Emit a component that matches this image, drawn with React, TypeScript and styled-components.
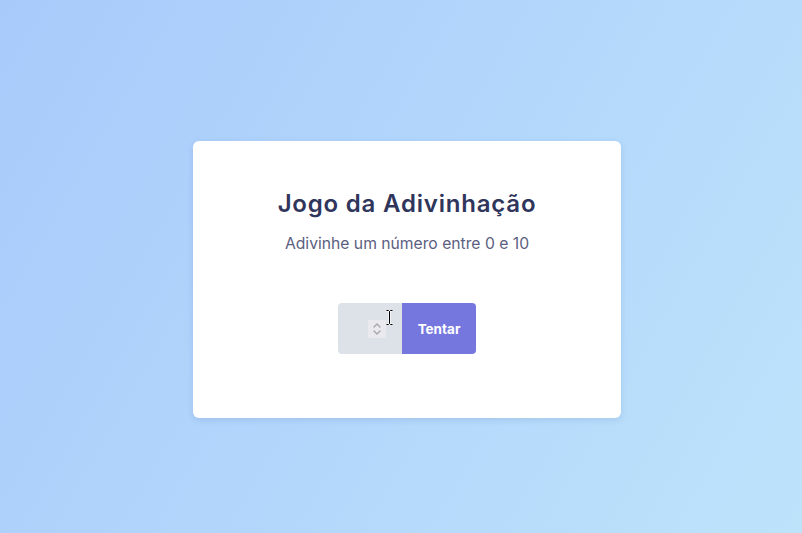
import React from "react";
import styled, { createGlobalStyle } from "styled-components";

const Global = createGlobalStyle`
  html, body { margin: 0; padding: 0; height: 100%; }
  #root { height: 100%; }
  * { box-sizing: border-box; }
`;

const Page = styled.main`
  width: 100%;
  height: 100vh;
  display: flex;
  align-items: center;
  justify-content: center;
  background-image: linear-gradient(120deg, #a8cafb 0%, #bde3fb 100%);
  font-family: "Inter", "Noto Sans", sans-serif;
`;

const Card = styled.section`
  width: 428px;
  height: 277px;
  margin: 26px 0 0 12px;
  background: #ffffff;
  border-radius: 6px;
  box-shadow: 0 2px 6px rgba(80, 110, 170, 0.18);
  display: flex;
  flex-direction: column;
  align-items: center;
  padding-top: 47px;
`;

const Title = styled.h1`
  margin: 0;
  font-family: "Inter", "Noto Sans", sans-serif;
  font-weight: 600;
  font-size: 24px;
  letter-spacing: 0.8px;
  line-height: 32px;
  color: #30355c;
`;

const Subtitle = styled.p`
  margin: 14px 0 0;
  font-family: "Inter", "Noto Sans", sans-serif;
  font-size: 15.7px;
  line-height: 20px;
  color: #5b5e80;
`;

const Form = styled.form`
  margin-top: 49px;
  display: flex;
  height: 51px;
  border-radius: 4px;
  overflow: hidden;
`;

const InputWrap = styled.div`
  position: relative;
  width: 64px;
  height: 100%;
  background: #dde1e8;
`;

const NumberInput = styled.input`
  width: 100%;
  height: 100%;
  border: none;
  outline: none;
  background: transparent;
  font-family: "Inter", sans-serif;
  font-size: 15px;
  text-align: center;
  -moz-appearance: textfield;
  &::-webkit-inner-spin-button,
  &::-webkit-outer-spin-button {
    -webkit-appearance: none;
    margin: 0;
  }
`;

const Spinner = styled.span`
  position: absolute;
  left: 30px;
  top: 17px;
  width: 18px;
  height: 18px;
  background: #e9e9ee;
  display: flex;
  align-items: center;
  justify-content: center;
  pointer-events: none;
`;

const Cursor = styled.svg`
  position: absolute;
  left: 48px;
  top: 7px;
  pointer-events: none;
`;

const Button = styled.button`
  width: 74px;
  height: 100%;
  border: none;
  background: #7577df;
  color: #ffffff;
  font-family: "Inter", "Noto Sans", sans-serif;
  font-weight: 700;
  font-size: 13.5px;
  cursor: pointer;
`;

export default function App() {
  return (
    <>
      <Global />
      <Page>
        <Card>
          <Title>Jogo da Adivinhação</Title>
          <Subtitle>Adivinhe um número entre 0 e 10</Subtitle>
          <Form onSubmit={(e) => e.preventDefault()}>
            <InputWrap>
              <NumberInput type="number" min={0} max={10} />
              <Spinner>
                <svg width="10" height="14" viewBox="0 0 10 14" fill="none" stroke="#a3a5ad" strokeWidth="1.3" strokeLinecap="round" strokeLinejoin="round">
                  <path d="M2 5 L5 2 L8 5" />
                  <path d="M2 9 L5 12 L8 9" />
                </svg>
              </Spinner>
              <Cursor width="7" height="15" viewBox="0 0 7 15" fill="none">
                <path d="M0.5 0.5 H2.5 L3.5 1.5 L4.5 0.5 H6.5 M3.5 1.5 V13.5 M0.5 14.5 H2.5 L3.5 13.5 L4.5 14.5 H6.5" stroke="#ffffff" strokeWidth="2.2" />
                <path d="M0.5 0.5 H2.5 L3.5 1.5 L4.5 0.5 H6.5 M3.5 1.5 V13.5 M0.5 14.5 H2.5 L3.5 13.5 L4.5 14.5 H6.5" stroke="#000000" strokeWidth="1" />
              </Cursor>
            </InputWrap>
            <Button type="submit">Tentar</Button>
          </Form>
        </Card>
      </Page>
    </>
  );
}
